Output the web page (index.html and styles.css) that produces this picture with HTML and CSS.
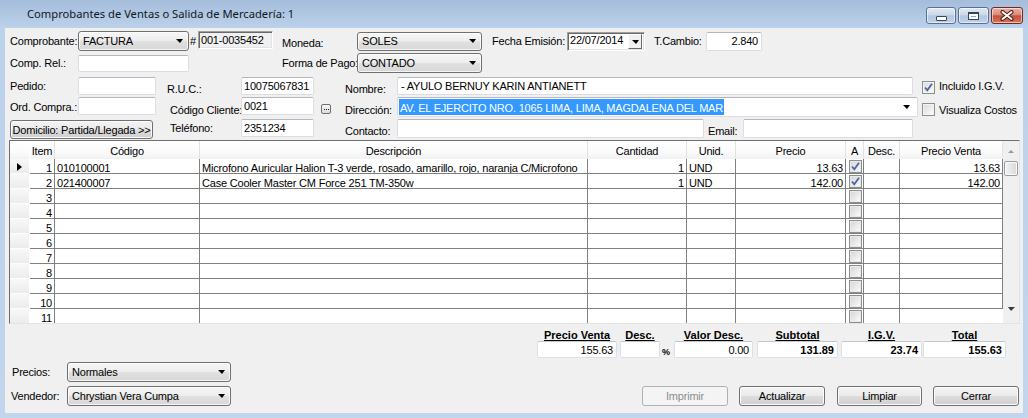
FILE: index.html
```html
<!DOCTYPE html>
<html lang="es">
<head>
<meta charset="utf-8">
<title>Comprobantes de Ventas o Salida de Mercadería</title>
<link rel="stylesheet" href="styles.css">
</head>
<body>
<div class="window">
  <div class="titlebar">
    <span class="title">Comprobantes de Ventas o Salida de Mercadería: 1</span>
    <div class="caps">
      <div class="cap cap-min"><span class="g-min"></span></div>
      <div class="cap cap-max"><span class="g-max"></span></div>
      <div class="cap cap-close">
        <svg width="14" height="11" viewBox="0 0 14 11"><path d="M2.5 2 L11.5 9 M11.5 2 L2.5 9" stroke="#4a1d15" stroke-width="4" stroke-linecap="round"/><path d="M2.5 2 L11.5 9 M11.5 2 L2.5 9" stroke="#ffffff" stroke-width="2" stroke-linecap="round"/></svg>
      </div>
    </div>
  </div>

  <div class="client">
    <div class="form">
      <div class="row r1">
        <span class="lbl w-l1">Comprobante:</span>
        <div class="combo f-comprobante"><span>FACTURA</span><i class="arr"></i></div>
        <span class="hash">#</span>
        <div class="ro f-numero">001-0035452</div>
        <span class="lbl lbl-moneda lo2">Moneda:</span>
        <div class="combo f-moneda"><span>SOLES</span><i class="arr"></i></div>
        <span class="lbl lbl-fecha">Fecha Emisión:</span>
        <div class="date"><span>22/07/2014</span><span class="dd"><i class="arr arr-dd"></i></span></div>
        <span class="lbl lbl-tc">T.Cambio:</span>
        <div class="edit f-tc right">2.840</div>
      </div>

      <div class="row r2">
        <span class="lbl w-l1">Comp. Rel.:</span>
        <div class="edit f-comprel"></div>
        <span class="lbl lbl-pago">Forma de Pago:</span>
        <div class="combo f-pago"><span>CONTADO</span><i class="arr"></i></div>
      </div>

      <div class="row r3">
        <span class="lbl w-l1">Pedido:</span>
        <div class="edit f-small"></div>
        <span class="lbl lbl-ruc lo">R.U.C.:</span>
        <div class="edit f-mid">10075067831</div>
        <span class="lbl lbl-nombre lo">Nombre:</span>
        <div class="edit f-nombre">- AYULO BERNUY KARIN ANTIANETT</div>
        <span class="chk chk-on lbl-chk1"><svg width="11" height="11" viewBox="0 0 11 11"><path d="M2 5.5 L4.3 8.3 L9 1.8" stroke="#4d63a6" stroke-width="1.8" fill="none"/></svg></span>
        <span class="lbl chk-text">Incluido I.G.V.</span>
      </div>

      <div class="row r4">
        <span class="lbl w-l1">Ord. Compra.:</span>
        <div class="edit f-small top"></div>
        <span class="lbl lbl-codcli lo">Código Cliente:</span>
        <div class="edit f-mid top">0021</div>
        <span class="dots"><svg width="5" height="1" viewBox="0 0 5 1"><rect x="0" y="0" width="1" height="1" fill="#222"/><rect x="2" y="0" width="1" height="1" fill="#222"/><rect x="4" y="0" width="1" height="1" fill="#222"/></svg></span>
        <span class="lbl lbl-dir lo">Dirección:</span>
        <div class="edit combo-edit f-dir"><span class="sel-text">AV. EL EJERCITO NRO. 1065 LIMA, LIMA, MAGDALENA DEL MAR</span><i class="arr"></i></div>
        <span class="chk lbl-chk2"></span>
        <span class="lbl chk-text lo">Visualiza Costos</span>
      </div>

      <div class="row r5">
        <button class="btn f-domicilio">Domicilio: Partida/Llegada &gt;&gt;</button>
        <span class="lbl lbl-tel">Teléfono:</span>
        <div class="edit f-mid f-tel">2351234</div>
        <span class="lbl lbl-contacto lo">Contacto:</span>
        <div class="edit f-contacto"></div>
        <span class="lbl lbl-email lo">Email:</span>
        <div class="edit f-email"></div>
      </div>
    </div>

    <div class="grid">
      <div class="table">
        <div class="h hi"></div><div class="h">Item</div><div class="h">Código</div><div class="h">Descripción</div><div class="h">Cantidad</div><div class="h">Unid.</div><div class="h">Precio</div><div class="h">A</div><div class="h">Desc.</div><div class="h">Precio Venta</div>

        <div class="ind"><i class="ptr"></i></div><div class="c n">1</div><div class="c">010100001</div><div class="c">Microfono Auricular Halion T-3 verde, rosado, amarillo, rojo, naranja C/Microfono</div><div class="c n">1</div><div class="c">UND</div><div class="c n">13.63</div><div class="c k"><span class="gchk"><svg width="11" height="11" viewBox="0 0 11 11"><path d="M2 5.5 L4.3 8.3 L9 1.8" stroke="#4d63a6" stroke-width="1.8" fill="none"/></svg></span></div><div class="c"></div><div class="c n">13.63</div>

        <div class="ind"></div><div class="c n">2</div><div class="c">021400007</div><div class="c">Case Cooler Master CM Force 251 TM-350w</div><div class="c n">1</div><div class="c">UND</div><div class="c n">142.00</div><div class="c k"><span class="gchk"><svg width="11" height="11" viewBox="0 0 11 11"><path d="M2 5.5 L4.3 8.3 L9 1.8" stroke="#4d63a6" stroke-width="1.8" fill="none"/></svg></span></div><div class="c"></div><div class="c n">142.00</div>

        <div class="ind"></div><div class="c n">3</div><div class="c"></div><div class="c"></div><div class="c"></div><div class="c"></div><div class="c"></div><div class="c k"><span class="gchk"></span></div><div class="c"></div><div class="c"></div>
        <div class="ind"></div><div class="c n">4</div><div class="c"></div><div class="c"></div><div class="c"></div><div class="c"></div><div class="c"></div><div class="c k"><span class="gchk"></span></div><div class="c"></div><div class="c"></div>
        <div class="ind"></div><div class="c n">5</div><div class="c"></div><div class="c"></div><div class="c"></div><div class="c"></div><div class="c"></div><div class="c k"><span class="gchk"></span></div><div class="c"></div><div class="c"></div>
        <div class="ind"></div><div class="c n">6</div><div class="c"></div><div class="c"></div><div class="c"></div><div class="c"></div><div class="c"></div><div class="c k"><span class="gchk"></span></div><div class="c"></div><div class="c"></div>
        <div class="ind"></div><div class="c n">7</div><div class="c"></div><div class="c"></div><div class="c"></div><div class="c"></div><div class="c"></div><div class="c k"><span class="gchk"></span></div><div class="c"></div><div class="c"></div>
        <div class="ind"></div><div class="c n">8</div><div class="c"></div><div class="c"></div><div class="c"></div><div class="c"></div><div class="c"></div><div class="c k"><span class="gchk"></span></div><div class="c"></div><div class="c"></div>
        <div class="ind"></div><div class="c n">9</div><div class="c"></div><div class="c"></div><div class="c"></div><div class="c"></div><div class="c"></div><div class="c k"><span class="gchk"></span></div><div class="c"></div><div class="c"></div>
        <div class="ind"></div><div class="c n">10</div><div class="c"></div><div class="c"></div><div class="c"></div><div class="c"></div><div class="c"></div><div class="c k"><span class="gchk"></span></div><div class="c"></div><div class="c"></div>
        <div class="ind"></div><div class="c n">11</div><div class="c"></div><div class="c"></div><div class="c"></div><div class="c"></div><div class="c"></div><div class="c k"><span class="gchk"></span></div><div class="c"></div><div class="c"></div>
      </div>
      <div class="vscroll">
        <div class="sb-btn"><i class="sb-up"></i></div>
        <div class="thumb"></div>
        <div class="sb-btn sb-bottom"><i class="sb-down"></i></div>
      </div>
    </div>

    <div class="totals">
      <div class="tg g-pv"><span class="tl">Precio Venta</span><div class="tb">155.63</div></div>
      <div class="tg g-desc"><span class="tl">Desc.</span><div class="tb"></div></div>
      <span class="pct">%</span>
      <div class="tg g-vd"><span class="tl">Valor Desc.</span><div class="tb">0.00</div></div>
      <div class="tg g-sub"><span class="tl">Subtotal</span><div class="tb b">131.89</div></div>
      <div class="tg g-igv"><span class="tl">I.G.V.</span><div class="tb b">23.74</div></div>
      <div class="tg g-tot"><span class="tl">Total</span><div class="tb b">155.63</div></div>
    </div>

    <div class="footer">
      <div class="selects">
        <div class="srow"><span class="slbl">Precios:</span><div class="combo f-sel"><span>Normales</span><i class="arr"></i></div></div>
        <div class="srow"><span class="slbl slbl2">Vendedor:</span><div class="combo f-sel"><span>Chrystian Vera Cumpa</span><i class="arr"></i></div></div>
      </div>
      <div class="buttons">
        <button class="btn fb dis">Imprimir</button>
        <button class="btn fb b-act">Actualizar</button>
        <button class="btn fb b-lim">Limpiar</button>
        <button class="btn fb b-cer">Cerrar</button>
      </div>
    </div>
  </div>
</div>
</body>
</html>
```

FILE: styles.css
```css
* { box-sizing: border-box; }
html, body { margin: 0; padding: 0; }
body {
  width: 1028px; height: 418px; overflow: hidden;
  font-family: "Liberation Sans", Arial, sans-serif;
  font-size: 11px; letter-spacing: -0.2px; color: #000; background: #bfd3ea;
}
.window {
  width: 1028px; height: 418px;
  display: flex; flex-direction: column;
  padding: 0 5px 5px;
  background: linear-gradient(to bottom, #a4bddb 0, #bcd1ea 28px, #c1d5ec 100%);
}
.titlebar { height: 28px; flex: none; display: flex; align-items: flex-start; }
.title {
  font-family: "Noto Sans", "Open Sans", sans-serif;
  font-size: 11.2px; line-height: 16px; letter-spacing: 0;
  margin: 6px 0 0 22px; color: #101626;
}
.caps { margin-left: auto; margin-top: 7px; display: flex; gap: 2px; }
.cap {
  height: 17px; border: 1px solid #5a7093; border-radius: 3px;
  display: flex; align-items: center; justify-content: center;
  box-shadow: inset 0 0 0 1px rgba(255,255,255,0.55);
  background: linear-gradient(#e2eaf4 0, #ccd9ea 45%, #b4c7df 52%, #c0d1e7 100%);
}
.cap-min { width: 30px; }
.cap-max { width: 31px; }
.cap-close {
  width: 32px; border-color: #6c2a21;
  background: linear-gradient(#eab2a6 0, #db8b78 45%, #c6503a 52%, #d7735c 100%);
}
.g-min { width: 11px; height: 5px; margin-top: 6px; background: #fff; border: 1px solid #36465f; border-radius: 1px; }
.g-max { width: 11px; height: 8px; background: #8ea3c2; border: 1px solid #33435e; box-shadow: inset 0 0 0 2px #fff; border-top-width: 2px; }

.client {
  flex: 1; background: #f0f0f0;
  padding: 3px 4px 0 4px;
  display: flex; flex-direction: column;
}
.form { padding-left: 1px; }
.row { display: flex; align-items: center; }
.r1 { height: 20px; }
.r2 { height: 20px; margin-top: 2px; }
.r3 { height: 20px; margin-top: 3px; }
.r4 { height: 20px; margin-top: 1px; }
.r5 { height: 21px; margin-top: 1px; }

.lbl { flex: none; white-space: nowrap; line-height: 13px; }
.lo { margin-top: 6px; }
.lo2 { margin-top: 4px; }
.w-l1 { width: 68px; }
.hash { flex: none; width: 9px; padding-left: 1px; }
.lbl-moneda { width: 75px; margin-left: 9px; }
.lbl-fecha { width: 75px; margin-left: 10px; }
.lbl-tc { width: 52px; margin-left: 9px; }
.lbl-pago { width: 75px; margin-left: 93px; }
.lbl-ruc { width: 74px; margin-left: 11px; }
.lbl-codcli { width: 71px; margin-left: 14px; }
.lbl-tel { width: 71px; margin-left: 17px; }
.lbl-nombre { width: 52px; margin-left: 31px; }
.lbl-dir { width: 52px; margin-left: 14px; }
.lbl-contacto { width: 52px; margin-left: 31px; }
.lbl-email { width: 35px; margin-left: 4px; }

.edit {
  flex: none; background: #fff;
  border: 1px solid #dadde3; border-top-color: #b4b7be;
  border-radius: 2px;
  padding: 0 2px; line-height: 13px;
  white-space: nowrap; overflow: hidden;
  display: flex; align-items: center;
}
.edit.right { justify-content: flex-end; padding-right: 3px; }
.edit.top { align-self: flex-start; }
.f-tc { width: 56px; height: 19px; }
.f-comprel { width: 111px; height: 17px; }
.f-small { width: 78px; height: 18px; }
.f-mid { width: 73px; height: 18px; }
.f-tel { align-self: flex-start; margin-top: 1px; }
.f-nombre { width: 516px; height: 18px; padding-left: 3px; }
.f-dir { width: 521px; height: 20px; padding-left: 1px; }
.f-contacto { width: 307px; height: 19px; }
.f-email { width: 170px; height: 19px; }
.sel-text { background: #3399ff; color: #fff; line-height: 16px; height: 16px; padding: 1px 1px 0 1px; }
.combo-edit .arr { margin-right: 5px; }

.combo {
  flex: none; display: flex; align-items: center;
  padding-left: 4px; white-space: nowrap;
  border: 1px solid #707070; border-radius: 3px;
  background: linear-gradient(#f7f7f7 0, #ededed 48%, #e0e0e0 52%, #d7d7d7 100%);
  box-shadow: inset 0 0 0 1px rgba(255,255,255,0.75);
}
.f-comprobante { width: 111px; height: 20px; align-self: flex-end; }
.f-moneda { width: 125px; height: 19px; }
.f-pago { width: 125px; height: 20px; }
.f-sel { width: 164px; height: 20px; }
.arr {
  display: block; margin-left: auto; margin-right: 5px;
  width: 0; height: 0;
  border-left: 4px solid transparent; border-right: 3px solid transparent;
  border-top: 4px solid #000;
}

.ro {
  flex: none; align-self: flex-start;
  width: 75px; height: 18px;
  background: #f0f0f0;
  border: 1px solid; border-color: #a0a0a0 #ffffff #ffffff #a0a0a0;
  box-shadow: inset 1px 1px 0 #696969, inset -1px -1px 0 #e3e3e3;
  padding: 2px 0 0 2px; line-height: 12px; white-space: nowrap;
}
.date {
  flex: none; width: 78px; height: 19px;
  background: #fff;
  border: 1px solid; border-color: #a0a0a0 #ffffff #ffffff #a0a0a0;
  box-shadow: inset 1px 1px 0 #696969, inset -1px -1px 0 #e3e3e3;
  display: flex; align-items: flex-start;
  padding: 1px 2px 0 2px; line-height: 13px;
}
.dd {
  margin-left: auto;
  width: 14px; height: 15px;
  background: #f0f0f0;
  border: 1px solid; border-color: #ffffff #696969 #696969 #ffffff;
  display: flex; align-items: center; justify-content: center;
}
.arr-dd { margin: 1px 0 0 0; }

.chk {
  flex: none; width: 13px; height: 13px;
  border: 1px solid #8e8f8f;
  background: linear-gradient(135deg, #d9dadc 0, #f2f2f3 70%, #ffffff 100%);
  box-shadow: inset 0 0 0 1px #f4f4f4;
  display: flex; align-items: center; justify-content: center;
}
.lbl-chk1 { margin-left: 9px; margin-top: 2px; }
.lbl-chk2 { margin-left: 4px; margin-top: 4px; }
.chk-text { margin-left: 4px; }

.dots {
  flex: none; width: 10px; height: 10px; margin-left: 7px; margin-top: 4px;
  border: 1px solid #6f6f6f; border-radius: 2px;
  background: linear-gradient(#f6f6f6, #dcdcdc);
  display: flex; align-items: center; justify-content: center;
}
.dots svg { display: block; }

.btn {
  flex: none; height: 20px;
  border: 1px solid #707070; border-radius: 3px;
  background: linear-gradient(#f3f3f3 0, #ebebeb 48%, #dddddd 52%, #cfcfcf 100%);
  box-shadow: inset 0 0 0 1px #fcfcfc;
  display: flex; align-items: center; justify-content: center;
  font: inherit; letter-spacing: inherit; color: #000; padding: 0; margin: 0;
  white-space: nowrap;
}
.f-domicilio { width: 143px; height: 19px; align-self: flex-end; }

.grid {
  flex: none; margin-top: 1px;
  width: 1011px; height: 184px;
  border: 1px solid; border-color: #6e6e6e #e3e3e3 #e3e3e3 #6e6e6e;
  display: flex; overflow: hidden; background: #fff;
}
.table {
  flex: none; width: 993px; height: 182px; overflow: hidden;
  display: grid;
  grid-template-columns: 20px 25px 145px 388px 99px 49px 110px 18px 36px 103px;
  grid-template-rows: 18px;
  grid-auto-rows: 15px;
  align-content: start;
}
.h {
  background: linear-gradient(#ffffff 0, #fbfbfb 60%, #f1f2f3 100%);
  border-right: 1px solid #e3e3e3;
  text-align: center; padding-top: 4px; line-height: 12px;
  white-space: nowrap; overflow: hidden;
}
.hi { border-right: 1px solid #fff; }
.c {
  border-right: 1px solid #808080; border-bottom: 1px solid #808080;
  padding: 3px 2px 0 2px; line-height: 12px;
  white-space: nowrap; overflow: hidden;
}
.c.n { text-align: right; padding-right: 2px; }
.c:last-child { border-right: 0; }
.ind {
  background: linear-gradient(#f8f8f8, #ececec);
  border-bottom: 1px solid #fdfdfd; border-right: 1px solid #fff;
  display: flex; align-items: center; padding: 2px 0 0 7px;
}
.ptr {
  display: block; width: 0; height: 0;
  border-top: 4px solid transparent; border-bottom: 4px solid transparent;
  border-left: 5px solid #000;
}
.c.k { padding: 1px 0 0 1px; display: flex; justify-content: center; align-items: flex-start; }
.gchk {
  display: flex; align-items: center; justify-content: center;
  width: 13px; height: 13px;
  border: 1px solid #8e8f8f;
  background: linear-gradient(135deg, #d4d5d7 0, #eeeeef 65%, #ffffff 100%);
  box-shadow: inset 0 0 0 1px #e8e8e8;
}

.vscroll {
  flex: 1; background: #f0f0f0;
  display: flex; flex-direction: column; align-items: center;
}
.sb-btn { height: 18px; width: 100%; display: flex; align-items: center; justify-content: center; flex: none; }
.sb-up {
  display: block; width: 0; height: 0; margin-top: 3px;
  border-left: 3px solid transparent; border-right: 3px solid transparent;
  border-bottom: 3px solid #9a9a9a;
}
.thumb {
  flex: none; margin-top: 2px; width: 14px; height: 15px;
  border: 1px solid #9c9c9c; border-radius: 2px;
  background: linear-gradient(to right, #f4f4f4, #e6e6e6 50%, #d9d9d9);
  box-shadow: inset 0 0 0 1px #fbfbfb;
}
.sb-bottom { margin-top: auto; height: 22px; align-items: flex-start; padding-top: 6px; }
.sb-down {
  display: block; width: 0; height: 0;
  border-left: 3px solid transparent; border-right: 4px solid transparent;
  border-top: 4px solid #3a3a3a;
}

.totals { display: flex; margin-left: 528px; height: 34px; flex: none; }
.tg { display: flex; flex-direction: column; align-items: center; }
.tl {
  height: 17px; display: flex; align-items: flex-end;
  font-weight: bold; text-decoration: underline; line-height: 12px;
  white-space: nowrap; letter-spacing: 0;
}
.tb {
  height: 17px; background: #fff;
  border: 1px solid #dcdfe5; border-top-color: #c3c6cc;
  border-radius: 2px;
  text-align: right; padding: 2px 3px 0 0; line-height: 12px;
}
.tb.b { font-weight: bold; letter-spacing: 0; }
.g-pv .tb { width: 80px; }
.g-desc { margin-left: 3px; }
.g-desc .tb { width: 40px; }
.pct { width: 14px; padding: 24px 0 0 2px; font-weight: bold; font-size: 9px; line-height: 9px; }
.g-vd .tb { width: 79px; }
.g-sub { margin-left: 4px; }
.g-sub .tb { width: 81px; }
.g-igv { margin-left: 3px; }
.g-igv .tb { width: 81px; }
.g-tot { margin-left: 1px; }
.g-tot .tb { width: 83px; }

.footer { display: flex; align-items: flex-end; margin-top: 4px; flex: none; }
.selects { display: flex; flex-direction: column; gap: 4px; }
.srow { display: flex; align-items: center; height: 20px; }
.slbl { flex: none; width: 58px; padding-left: 3px; }
.slbl2 { padding-left: 2px; }
.buttons { margin-left: auto; display: flex; }
.fb { width: 86px; height: 20px; }
.b-act { margin-left: 11px; }
.b-lim { margin-left: 12px; width: 85px; }
.b-cer { margin-left: 11px; }
.btn.dis {
  border-color: #adb2b5; background: #f4f4f4; color: #8d8d8d; box-shadow: none;
}
```
